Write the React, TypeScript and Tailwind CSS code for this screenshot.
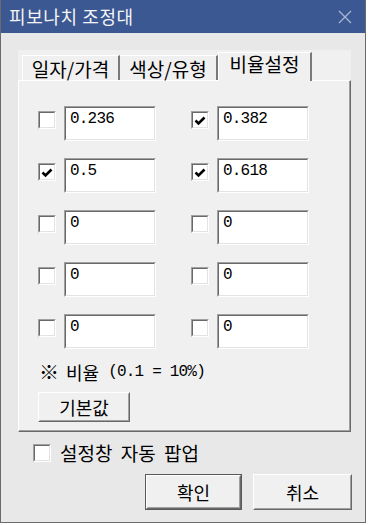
import React from "react";

const mono = "font-['Liberation_Mono','Noto_Sans_CJK_KR',monospace]";

const rows: [string, boolean, string, boolean][] = [
  ["0.236", false, "0.382", true],
  ["0.5", true, "0.618", true],
  ["0", false, "0", false],
  ["0", false, "0", false],
  ["0", false, "0", false],
];

function CheckBox({ checked }: { checked: boolean }) {
  return (
    <div className="h-[18px] w-[18px] shrink-0 border border-t-[#a0a0a0] border-l-[#a0a0a0] border-b-white border-r-white">
      <div className="flex h-full w-full items-center justify-center border border-t-[#696969] border-l-[#696969] border-b-[#e3e3e3] border-r-[#e3e3e3] bg-white">
        {checked && (
          <svg width="12" height="10" viewBox="0 0 12 10" className="mt-[2px]">
            <path d="M1.5 4.5 L4.5 7.5 L10.5 1.5" stroke="#000" strokeWidth="2.6" fill="none" />
          </svg>
        )}
      </div>
    </div>
  );
}

function TextBox({ value }: { value: string }) {
  return (
    <div className="h-[35px] w-[92px] border border-t-[#a0a0a0] border-l-[#a0a0a0] border-b-white border-r-white">
      <div
        className={`h-full w-full border border-t-[#696969] border-l-[#696969] border-b-[#e3e3e3] border-r-[#e3e3e3] bg-white pl-[4px] pt-[1px] text-[16px] leading-[20px] tracking-[-0.8px] text-black ${mono}`}
      >
        {value}
      </div>
    </div>
  );
}

function Button({ label, width, height, isDefault }: { label: string; width: string; height: string; isDefault?: boolean }) {
  const face = (
    <div className="h-full w-full border border-t-white border-l-white border-b-[#696969] border-r-[#696969]">
      <div className="flex h-full w-full items-center justify-center border border-t-[#f0f0f0] border-l-[#f0f0f0] border-b-[#a0a0a0] border-r-[#a0a0a0] bg-[#f0f0f0] text-[18px] text-black">
        {label}
      </div>
    </div>
  );
  return (
    <div className={`${width} ${height} ${isDefault ? "border border-[#5a5a5a]" : ""}`}>{face}</div>
  );
}

export default function App() {
  return (
    <div className="flex h-[525px] w-[368px] bg-white font-['Noto_Sans_CJK_KR',sans-serif]">
      <div className="flex h-[523px] w-[366px] flex-col border-x border-b border-[#6a6a6a] bg-[#e8e8e8]">
        {/* title bar */}
        <div className="flex h-[33px] shrink-0 items-center justify-between bg-[#3b5893] pl-[8px] pr-[13px]">
          <span className="text-[18px] tracking-[0.6px] text-[#f4f4f4]">피보나치 조정대</span>
          <svg width="14" height="14" viewBox="0 0 14 14">
            <path d="M1 1 L13 13 M13 1 L1 13" stroke="#a9b6d2" strokeWidth="1.3" />
          </svg>
        </div>

        <div className="flex flex-col pl-[17px] pt-[17px]">
          {/* tab strip */}
          <div className="relative z-10 flex h-[30px] w-[333px] items-end bg-[#f0f0f0] pl-[4px]">
            <div className="flex h-[25px] w-[98px] items-center justify-center border-l border-t border-r-2 border-l-white border-t-white border-r-[#7a7a7a] text-[19px] leading-none">
              일자/가격
            </div>
            <div className="flex h-[25px] w-[98px] items-center justify-center border-t border-r-2 border-t-white border-r-[#7a7a7a] text-[19px] leading-none">
              색상/유형
            </div>
            <div className="-mb-px flex h-[29px] w-[94px] justify-center border-l border-t border-r-2 border-l-white border-t-white border-r-[#7a7a7a] bg-[#f0f0f0] pt-[1px] text-[19px] leading-[20px]">
              비율설정
            </div>
          </div>

          {/* panel */}
          <div className="flex h-[352px] w-[333px] flex-col border border-t-white border-l-white border-b-[#696969] border-r-[#696969] bg-[#f0f0f0]">
            <div className="flex h-full flex-col border-b border-r border-b-[#a0a0a0] border-r-[#a0a0a0] pl-[19px] pt-[25px]">
              <div className="grid grid-cols-[118px_118px] gap-x-[35px] gap-y-[17px]">
                {rows.map((r, i) => (
                  <React.Fragment key={i}>
                    <div className="flex items-start gap-[8px]">
                      <div className="mt-[5px]">
                        <CheckBox checked={r[1]} />
                      </div>
                      <TextBox value={r[0]} />
                    </div>
                    <div className="flex items-start gap-[8px]">
                      <div className="mt-[5px]">
                        <CheckBox checked={r[3]} />
                      </div>
                      <TextBox value={r[2]} />
                    </div>
                  </React.Fragment>
                ))}
              </div>

              <div className="mt-[13px] flex h-[20px] items-center pl-[1px] text-[18px] leading-[20px] text-black">
                <span className="text-[20px]">※</span>
                <span className="ml-[7px]">비율</span>
                <span className={`ml-[9px] text-[16px] tracking-[-0.8px] ${mono}`}>(0.1 = 10%)</span>
              </div>

              <div className="mt-[10px]">
                <Button label="기본값" width="w-[92px]" height="h-[30px]" />
              </div>
            </div>
          </div>

          {/* auto popup */}
          <div className="mt-[11px] flex items-center gap-[9px] pl-[15px]">
            <CheckBox checked={false} />
            <span className="text-[19px] leading-[20px] text-black [word-spacing:4px]">설정창 자동 팝업</span>
          </div>

          {/* buttons */}
          <div className="mt-[11px] flex w-[334px] justify-end gap-[11px]">
            <Button label="확인" width="w-[97px]" height="h-[36px]" isDefault />
            <Button label="취소" width="w-[99px]" height="h-[36px]" />
          </div>
        </div>
      </div>
    </div>
  );
}
